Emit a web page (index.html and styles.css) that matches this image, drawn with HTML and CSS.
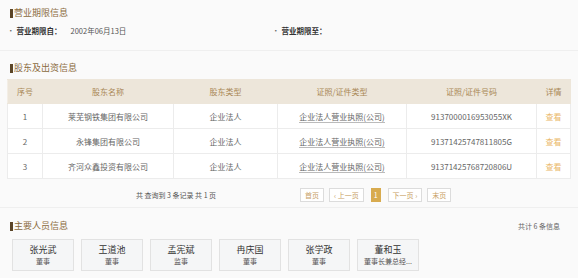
FILE: index.html
```html
<!DOCTYPE html>
<html lang="zh">
<head>
<meta charset="utf-8">
<link rel="stylesheet" href="styles.css">
</head>
<body>
<section class="sec sec-term">
  <h3 class="title"><span class="bar"></span>营业期限信息</h3>
  <div class="term-row">
    <div class="term"><span class="dot">·</span><b>营业期限自：</b><span class="val">2002年06月13日</span></div>
    <div class="term"><span class="dot">·</span><b>营业期限至：</b></div>
  </div>
</section>
<section class="sec sec-holder">
  <h3 class="title"><span class="bar"></span>股东及出资信息</h3>
  <table class="tbl">
    <colgroup>
      <col class="c1"><col class="c2"><col class="c3"><col class="c4"><col class="c5"><col class="c6">
    </colgroup>
    <thead>
      <tr><th>序号</th><th>股东名称</th><th>股东类型</th><th>证照/证件类型</th><th>证照/证件号码</th><th>详情</th></tr>
    </thead>
    <tbody>
      <tr><td>1</td><td>莱芜钢铁集团有限公司</td><td>企业法人</td><td><u>企业法人营业执照(公司)</u></td><td>9137000016953055XK</td><td><a class="link">查看</a></td></tr>
      <tr><td>2</td><td>永锋集团有限公司</td><td>企业法人</td><td><u>企业法人营业执照(公司)</u></td><td>91371425747811805G</td><td><a class="link">查看</a></td></tr>
      <tr><td>3</td><td>齐河众鑫投资有限公司</td><td>企业法人</td><td><u>企业法人营业执照(公司)</u></td><td>91371425768720806U</td><td><a class="link">查看</a></td></tr>
    </tbody>
  </table>
  <div class="pager">
    <div class="pager-info">共 查询到 3 条记录 共 1 页</div>
    <div class="pager-btns">
      <span class="pbtn">首页</span>
      <span class="pbtn">‹ 上一页</span>
      <span class="pbtn active">1</span>
      <span class="pbtn">下一页 ›</span>
      <span class="pbtn">末页</span>
    </div>
  </div>
</section>
<section class="sec sec-staff">
  <div class="staff-head">
    <h3 class="title"><span class="bar"></span>主要人员信息</h3>
    <span class="count">共计 6 条信息</span>
  </div>
  <div class="cards">
    <div class="card"><div class="name">张光武</div><div class="role">董事</div></div>
    <div class="card"><div class="name">王道池</div><div class="role">董事</div></div>
    <div class="card"><div class="name">孟宪斌</div><div class="role">监事</div></div>
    <div class="card"><div class="name">冉庆国</div><div class="role">董事</div></div>
    <div class="card"><div class="name">张学政</div><div class="role">董事</div></div>
    <div class="card"><div class="name">董和玉</div><div class="role">董事长兼总经...</div></div>
  </div>
</section>
</body>
</html>
```
FILE: styles.css
```css
html, body {
  margin: 0;
  padding: 0;
}
body {
  width: 578px;
  height: 278px;
  overflow: hidden;
  background: #fafafa;
  font-family: "Noto Sans CJK SC", "Noto Sans", sans-serif;
  font-size: 8px;
  color: #555;
}
.sec {
  box-sizing: border-box;
  border-bottom: 1px solid #efefef;
}
.title {
  margin: 0;
  display: flex;
  align-items: center;
  font-size: 9px;
  font-weight: normal;
  color: #8a6b3e;
  line-height: 12px;
  height: 12px;
}
.bar {
  display: inline-block;
  width: 3px;
  height: 9px;
  background: #5b4527;
  margin-right: 1px;
}
.sec-term {
  padding: 7px 0 0 7px;
  height: 51px;
}
.sec-term .title {
  margin-left: 3px;
}
.term-row {
  display: flex;
  margin-top: 6px;
  line-height: 12px;
  font-size: 7.5px;
}
.term {
  width: 265px;
  display: flex;
  align-items: center;
}
.dot {
  color: #666;
  margin-right: 2px;
}
.term b {
  color: #333;
  font-weight: bold;
}
.val {
  margin-left: 9px;
  color: #555;
}
.sec-holder {
  height: 157px;
  padding-top: 11px;
}
.sec-holder .title {
  margin-left: 10px;
}
.tbl {
  margin: 5px 0 0 7px;
  width: 563px;
  border-collapse: collapse;
  table-layout: fixed;
  background: #fff;
}
.c1 { width: 35px; }
.c2 { width: 131px; }
.c3 { width: 104px; }
.c4 { width: 129px; }
.c5 { width: 130px; }
.c6 { width: 34px; }
.tbl th {
  background: #ede6da;
  color: #a98755;
  font-weight: normal;
  height: 23px;
  padding: 0;
  border: 1px solid #ede6da;
  border-left-color: #f3eee6;
}
.tbl td {
  height: 24px;
  padding: 0;
  text-align: center;
  border: 1px solid #ececec;
  color: #666;
  white-space: nowrap;
}
.tbl td u {
  text-decoration: none;
  border-bottom: 1px solid #bbb;
}
.link {
  color: #eab96a;
}
.pager {
  display: flex;
  align-items: center;
  margin-top: 9px;
  height: 14px;
}
.pager-info {
  width: 300px;
  text-align: center;
  font-size: 7px;
  color: #555;
  margin-left: 26px;
}
.pager-btns {
  display: flex;
  gap: 5px;
  margin-left: -26px;
}
.pbtn {
  border: 1px solid #dcdcdc;
  background: #fff;
  color: #c8a064;
  height: 12px;
  line-height: 12px;
  padding: 0 4px;
  font-size: 7px;
  white-space: nowrap;
}
.pbtn.active {
  background: #d8ab4f;
  border-color: #d8ab4f;
  color: #fff;
  padding: 0 2px;
  margin: 0 2px;
}
.sec-staff {
  border-bottom: none;
  padding-top: 12px;
}
.staff-head {
  display: flex;
  justify-content: space-between;
  align-items: center;
  padding: 0 18px 0 10px;
}
.count {
  color: #666;
  font-size: 7px;
}
.cards {
  display: flex;
  gap: 7px;
  margin: 7px 0 0 12px;
}
.card {
  border: 1px solid #e2e2e2;
  background: #f5f6f7;
  text-align: center;
  box-sizing: border-box;
  width: 62px;
  height: 32px;
  padding-top: 3px;
}
.name {
  font-size: 9px;
  color: #333;
  line-height: 13px;
}
.role {
  font-size: 7px;
  color: #555;
  line-height: 11px;
}
```
